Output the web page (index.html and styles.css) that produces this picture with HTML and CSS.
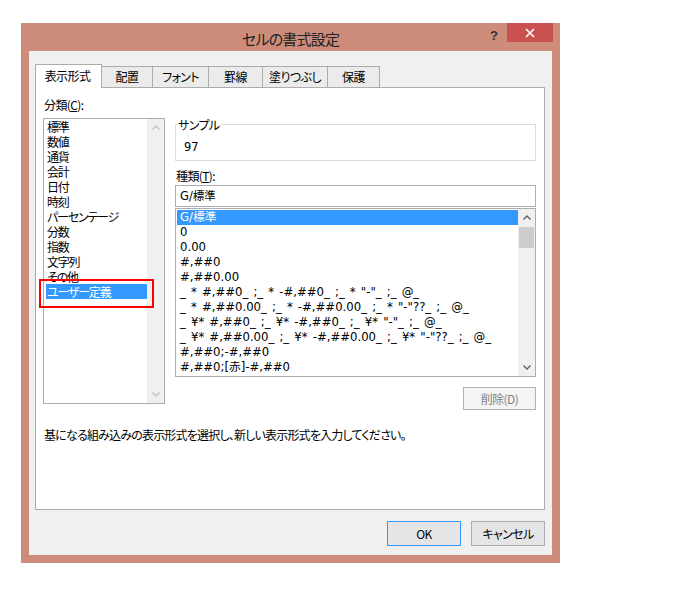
FILE: index.html
```
<!DOCTYPE html>
<html lang="ja">
<head>
    <meta charset="UTF-8">
    <title>セルの書式設定</title>
    <link rel="stylesheet" href="styles.css">
</head>
<body>
    <div class="dialog">
        <div class="titlebar">
            <div></div>
            <div class="title">セルの書式設定</div>
            <div class="controls">
                <span class="help">?</span>
                <span class="close">
                    <svg width="10" height="10" viewBox="0 0 10 10"><path d="M1 1L9 9M9 1L1 9" stroke="#fff" stroke-width="1.6" fill="none"/></svg>
                </span>
            </div>
        </div>
        <div class="client">
            <div class="tabs">
                <div class="tab active">表示形式</div>
                <div class="tab">配置</div>
                <div class="tab">フォント</div>
                <div class="tab">罫線</div>
                <div class="tab">塗りつぶし</div>
                <div class="tab">保護</div>
            </div>
            <div class="panel">
                <div class="cols">
                    <div class="left">
                        <div class="label">分類(<u>C</u>):</div>
                        <div class="listbox cat">
                            <ul class="items">
                                <li>標準</li>
                                <li>数値</li>
                                <li>通貨</li>
                                <li>会計</li>
                                <li>日付</li>
                                <li>時刻</li>
                                <li>パーセンテージ</li>
                                <li>分数</li>
                                <li>指数</li>
                                <li>文字列</li>
                                <li>その他</li>
                                <li class="sel">ユーザー定義</li>
                            </ul>
                            <div class="vscroll off">
                                <div class="arrow"><svg width="8" height="5" viewBox="0 0 8 5"><path d="M0.5 4.5L4 1L7.5 4.5" stroke="currentColor" stroke-width="1.4" fill="none"/></svg></div>
                                <div class="track"></div>
                                <div class="arrow"><svg width="8" height="5" viewBox="0 0 8 5"><path d="M0.5 0.5L4 4L7.5 0.5" stroke="currentColor" stroke-width="1.4" fill="none"/></svg></div>
                            </div>
                            <div class="mark"></div>
                        </div>
                    </div>
                    <div class="right">
                        <fieldset class="sample">
                            <legend>サンプル</legend>
                            <div class="sample-value">97</div>
                        </fieldset>
                        <div class="label kind">種類(<u>T</u>):</div>
                        <div class="textbox">G/標準</div>
                        <div class="listbox fmt">
                            <ul class="items">
                                <li class="sel">G/標準</li>
                                <li>0</li>
                                <li>0.00</li>
                                <li>#,##0</li>
                                <li>#,##0.00</li>
                                <li>_ * #,##0_ ;_ * -#,##0_ ;_ * "-"_ ;_ @_</li>
                                <li>_ * #,##0.00_ ;_ * -#,##0.00_ ;_ * "-"??_ ;_ @_</li>
                                <li>_ ¥* #,##0_ ;_ ¥* -#,##0_ ;_ ¥* "-"_ ;_ @_</li>
                                <li>_ ¥* #,##0.00_ ;_ ¥* -#,##0.00_ ;_ ¥* "-"??_ ;_ @_</li>
                                <li>#,##0;-#,##0</li>
                                <li>#,##0;[赤]-#,##0</li>
                            </ul>
                            <div class="vscroll">
                                <div class="arrow"><svg width="8" height="5" viewBox="0 0 8 5"><path d="M0.5 4.5L4 1L7.5 4.5" stroke="currentColor" stroke-width="1.4" fill="none"/></svg></div>
                                <div class="thumb"></div>
                                <div class="track"></div>
                                <div class="arrow"><svg width="8" height="5" viewBox="0 0 8 5"><path d="M0.5 0.5L4 4L7.5 0.5" stroke="currentColor" stroke-width="1.4" fill="none"/></svg></div>
                            </div>
                        </div>
                        <div class="btn-row">
                            <button class="btn small" disabled>削除(D)</button>
                        </div>
                    </div>
                </div>
                <p class="desc">基になる組み込みの表示形式を選択し、新しい表示形式を入力してください。</p>
            </div>
            <div class="footer">
                <button class="btn default">OK</button>
                <button class="btn">キャンセル</button>
            </div>
        </div>
    </div>
</body>
</html>
```

FILE: styles.css
```
body { margin: 0; background: #fff; font-family: "Noto Sans CJK JP", sans-serif; font-size: 12px; color: #000; font-feature-settings: "palt"; letter-spacing: -0.6px; }
.dialog { margin: 23px 0 0 21px; width: 539px; height: 540px; background: #cd8d7a; display: flex; flex-direction: column; }
.titlebar { height: 28px; display: grid; grid-template-columns: 1fr auto 1fr; }
.title { font-size: 15px; line-height: 20px; padding-top: 6px; color: #222; letter-spacing: -0.8px; }
.controls { display: flex; justify-content: flex-end; align-items: flex-start; margin-right: 7px; }
.help { width: 26px; text-align: center; font-size: 13px; font-weight: bold; line-height: 16px; padding-top: 5px; color: #333; font-family: "Liberation Sans", sans-serif; letter-spacing: 0; }
.close { width: 46px; height: 19px; background: #c9514f; display: flex; align-items: center; justify-content: center; }
.client { flex: 1; margin: 0 8px 8px 8px; background: #f0f0f0; padding: 13px 7px 0 6px; display: flex; flex-direction: column; }
.tabs { display: flex; align-items: flex-end; height: 24px; margin-bottom: -1px; position: relative; z-index: 1; }
.tab { box-sizing: border-box; height: 21px; line-height: 20px; margin-bottom: 1px; margin-left: -1px; text-align: center; border: 1px solid #acacac; border-bottom: none; background: #ebebeb; }
.tab:nth-child(1) { width: 67px; margin-left: 0; }
.tab:nth-child(2) { width: 52px; }
.tab:nth-child(3) { width: 57px; }
.tab:nth-child(4) { width: 55px; }
.tab:nth-child(5) { width: 66px; }
.tab:nth-child(6) { width: 53px; }
.tab.active { height: 24px; line-height: 22px; margin-bottom: 0; background: #fff; padding-right: 2px; }
.panel { height: 423px; box-sizing: border-box; background: #fff; border: 1px solid #acacac; padding: 9px 6px 0 7px; }
.cols { display: grid; grid-template-columns: 122px 361px; column-gap: 10px; }
.label { line-height: 15px; padding-left: 1px; }
.listbox { display: flex; border: 1px solid #abadb3; background: #fff; box-sizing: border-box; position: relative; }
.items { list-style: none; margin: 0; flex: 1; }
.items li { line-height: 15px; height: 15px; white-space: pre; overflow: hidden; }
.items .sel { background: #3399ff; color: #fff; }
.cat { margin-top: 6px; height: 286px; }
.cat .items { padding: 0 0 0 2px; letter-spacing: -1.2px; }
.cat .items li { padding-left: 1px; }
.fmt { margin-top: 1px; height: 169px; }
.fmt .items { padding: 1px 0 0 1px; font-family: "DejaVu Sans", "Noto Sans CJK JP", sans-serif; font-size: 11.7px; letter-spacing: 0; word-spacing: 1.4px; }
.fmt .items li { padding-left: 3px; }
.vscroll { width: 17px; background: #f0f0f0; display: flex; flex-direction: column; color: #606060; }
.vscroll.off { color: #c2c2c2; }
.arrow { height: 17px; display: flex; align-items: center; justify-content: center; }
.track { flex: 1; }
.thumb { height: 21px; margin: 1px 1px 0; background: #cdcdcd; }
.mark { position: absolute; left: -5px; top: 160px; width: 115px; height: 29px; box-sizing: border-box; border: 2px solid #f00; }
.sample { margin: 20px 0 0; padding: 8px 8px 5px; border: 1px solid #dcdcdc; min-width: 0; }
.sample legend { padding: 0 1px; margin-left: -7px; line-height: 15px; }
.sample-value { line-height: 15px; font-family: "DejaVu Sans", sans-serif; font-size: 11.5px; letter-spacing: 0; }
.kind { margin-top: 7px; }
.textbox { margin-top: 2px; height: 22px; box-sizing: border-box; border: 1px solid #abadb3; line-height: 20px; padding-left: 4px; background: #fff; font-family: "DejaVu Sans", "Noto Sans CJK JP", sans-serif; font-size: 11.5px; letter-spacing: 0; }
.btn-row { display: flex; justify-content: flex-end; margin-top: 10px; }
.btn { width: 74px; height: 25px; border: 1px solid #acacac; background: #e5e5e5; font-family: inherit; font-size: 12px; font-feature-settings: "palt"; letter-spacing: -0.6px; color: #000; padding: 0; }
.btn.small { width: 73px; height: 23px; }
.btn:disabled { background: #f4f4f4; border-color: #adb2b5; color: #838383; }
.btn.default { border-color: #3399ff; }
.desc { margin: 17px 0 0 1px; line-height: 15px; letter-spacing: -0.8px; }
.footer { display: flex; justify-content: flex-end; gap: 10px; margin-top: 11px; }
```
